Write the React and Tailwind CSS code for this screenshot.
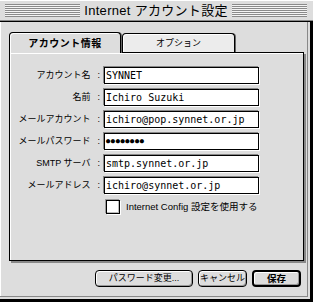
export default function App() {
  const rows = [
    ["アカウント名", "SYNNET"],
    ["名前", "Ichiro Suzuki"],
    ["メールアカウント", "ichiro@pop.synnet.or.jp"],
    ["メールパスワード", "●●●●●●●●"],
    ["SMTP サーバ", "smtp.synnet.or.jp"],
    ["メールアドレス", "ichiro@synnet.or.jp"],
  ];
  const stripe =
    "flex-1 h-[13px] bg-[repeating-linear-gradient(to_bottom,#8a8a8a_0px,#8a8a8a_1px,#f4f4f4_1px,#f4f4f4_2px)]";
  return (
    <div className="w-[313px] h-[302px] bg-[#dddddd] flex flex-col text-black font-['Liberation_Sans','Noto_Sans_CJK_JP',sans-serif] overflow-hidden">
      {/* Title bar */}
      <div className="h-[22px] flex items-center pl-[5px] pr-[6px] pb-[1px] border-b border-black shadow-[inset_0_-1px_0_#888,inset_0_1px_0_#fff]">
        <div className={stripe} />
        <div className="mx-[4px] text-[13px] leading-none tracking-[0.3px] whitespace-nowrap">
          Internet アカウント設定
        </div>
        <div className={stripe} />
      </div>

      {/* Body */}
      <div className="flex-1 flex flex-col pt-[10px] pl-[9px] shadow-[inset_-3px_-3px_0_#000,inset_-5px_-5px_0_#dddddd,inset_-6px_-6px_0_#888,inset_1px_0_0_#fff]">
        {/* Tabs */}
        <div className="flex items-end h-[20px]">
          <div className="relative z-10 -mb-px w-[112px] h-[21px] bg-[#dddddd] border border-b-0 border-black rounded-t-[4px] shadow-[inset_1px_1px_0_#fff,1px_0_0_#666] flex justify-center pt-[6px] text-[10px] font-bold leading-none tracking-[0.5px]">
            アカウント情報
          </div>
          <div className="ml-px w-[113px] h-[19px] bg-[#ececec] border border-b-0 border-black rounded-t-[4px] shadow-[inset_1px_1px_0_#fff,1px_0_0_#666] flex justify-center pt-[5px] text-[9px] leading-none">
            オプション
          </div>
        </div>

        {/* Panel */}
        <div className="w-[295px] h-[209px] border border-black bg-[#dddddd] shadow-[inset_1px_1px_0_#fff,2px_2px_0_#888] pt-[14px]">
          <div className="flex flex-col gap-[5px]">
            {rows.map(([label, value]) => (
              <div key={label} className="flex items-center h-[17px]">
                <div className="w-[90px] text-right text-[9px] leading-none whitespace-nowrap">
                  {label}
                  <span className="ml-[7px]">:</span>
                </div>
                <div className="ml-[4px] w-[155px] h-[17px] bg-white border border-black shadow-[-1px_-1px_0_#888,1px_1px_0_#fff] flex items-center pl-[1px] text-[10px] leading-none font-['DejaVu_Sans_Mono',monospace] whitespace-nowrap overflow-hidden">
                  {label === "メールパスワード" ? (
                    <span className="text-[7px] tracking-[0.6px]">{value}</span>
                  ) : (
                    value
                  )}
                </div>
              </div>
            ))}
            <div className="flex items-center h-[15px]">
              <div className="ml-[96px] w-[14px] h-[14px] bg-white border border-black shadow-[inset_-1px_-1px_0_#bbb,-1px_-1px_0_#999,1px_1px_0_#fff]" />
              <div className="ml-[6px] text-[9.5px] leading-none whitespace-nowrap">
                Internet Config 設定を使用する
              </div>
            </div>
          </div>
        </div>

        {/* Buttons */}
        <div className="mt-[9px] flex justify-end gap-[5px] pr-[12px]">
          <button className="w-[98px] h-[17px] border border-black rounded-[4px] bg-[#dddddd] shadow-[inset_1px_1px_0_#fff,inset_-1px_-1px_0_#999] text-[9px] leading-none flex items-center justify-center">
            パスワード変更...
          </button>
          <button className="w-[49px] h-[17px] border border-black rounded-[4px] bg-[#dddddd] shadow-[inset_1px_1px_0_#fff,inset_-1px_-1px_0_#999] text-[9px] leading-none flex items-center justify-center">
            キャンセル
          </button>
          <button className="w-[49px] h-[17px] border-2 border-black rounded-[4px] bg-[#dddddd] shadow-[inset_1px_1px_0_#fff,inset_-1px_-1px_0_#999] text-[9.5px] font-bold leading-none flex items-center justify-center">
            保存
          </button>
        </div>
      </div>
    </div>
  );
}
